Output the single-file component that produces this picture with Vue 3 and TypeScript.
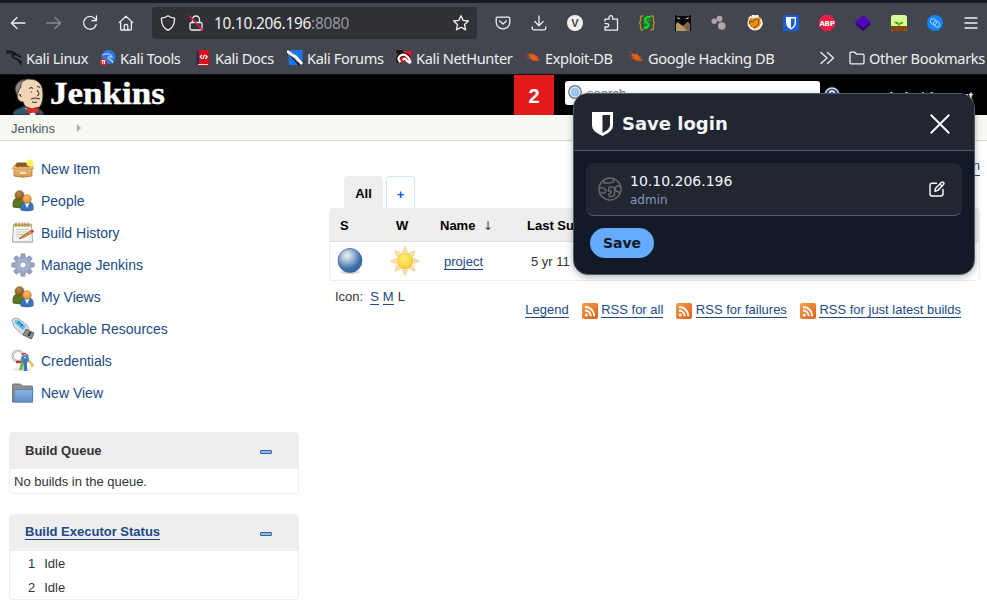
<script setup lang="ts">
interface Entry {
  id: string
  label: string
}

const tools: string[] = ['pocket', 'download', 'vee', 'puzzle', 'braces', 'bat', 'dots', 'fox', 'vault', 'abp', 'layers', 'plant', 'chain', 'menu']

const bookmarks: Entry[] = [
  { id: 'kali', label: 'Kali Linux' },
  { id: 'ktools', label: 'Kali Tools' },
  { id: 'docs', label: 'Kali Docs' },
  { id: 'forums', label: 'Kali Forums' },
  { id: 'hunter', label: 'Kali NetHunter' },
  { id: 'bug', label: 'Exploit-DB' },
  { id: 'bug2', label: 'Google Hacking DB' },
]

const tasks: Entry[] = [
  { id: 'box', label: 'New Item' },
  { id: 'people', label: 'People' },
  { id: 'notepad', label: 'Build History' },
  { id: 'gear', label: 'Manage Jenkins' },
  { id: 'people', label: 'My Views' },
  { id: 'usb', label: 'Lockable Resources' },
  { id: 'keys', label: 'Credentials' },
  { id: 'folder', label: 'New View' },
]

const feeds: Entry[] = [
  { id: 'all', label: 'RSS for all' },
  { id: 'failures', label: 'RSS for failures' },
  { id: 'latest', label: 'RSS for just latest builds' },
]

const executors: number[] = [1, 2]
const rays: number[] = [0, 45, 90, 135, 180, 225, 270, 315]
</script>

<template>
  <div class="window">
    <svg class="defs" width="0" height="0">
      <defs>
        <linearGradient id="gBox" x1="0" y1="0" x2="0" y2="1"><stop offset="0" stop-color="#f3c989" /><stop offset="1" stop-color="#d59a4c" /></linearGradient>
        <linearGradient id="gFolder" x1="0" y1="0" x2="0" y2="1"><stop offset="0" stop-color="#8db4e0" /><stop offset="1" stop-color="#5e8fc9" /></linearGradient>
        <linearGradient id="gRss" x1="0" y1="0" x2="1" y2="1"><stop offset="0" stop-color="#f6a04a" /><stop offset="1" stop-color="#dd5f1c" /></linearGradient>
        <radialGradient id="gBall" cx=".38" cy=".3" r=".8"><stop offset="0" stop-color="#eef3ea" /><stop offset=".25" stop-color="#b4c9dc" /><stop offset=".65" stop-color="#4676b0" /><stop offset="1" stop-color="#2a5a9c" /></radialGradient>
        <radialGradient id="gSun" cx=".45" cy=".35" r=".7"><stop offset="0" stop-color="#ffee78" /><stop offset=".6" stop-color="#ffdb45" /><stop offset="1" stop-color="#f9bf3a" /></radialGradient>
        <radialGradient id="gHeadA" cx=".4" cy=".3" r=".8"><stop offset="0" stop-color="#b78a4c" /><stop offset="1" stop-color="#7c5117" /></radialGradient>
        <radialGradient id="gHeadB" cx=".4" cy=".3" r=".8"><stop offset="0" stop-color="#ffc178" /><stop offset="1" stop-color="#de8520" /></radialGradient>
      </defs>
    </svg>

    <header class="chrome">
      <div class="toolbar">
        <nav class="nav">
          <span class="slot"><svg class="line" viewBox="0 0 16 16"><path d="M15 8H1.600M7 2.500 1.400 8 7 13.500" /></svg></span>
          <span class="slot dim"><svg class="line" viewBox="0 0 16 16"><path d="M1 8h13.400M9 2.500 14.600 8 9 13.500" /></svg></span>
          <span class="slot"><svg class="line" viewBox="0 0 16 16"><path d="M14.200 9.500A6.400 6.400 0 1 1 13 3.800l1.500 1.700M14.500 1v4.700H9.800" /></svg></span>
          <span class="slot"><svg class="line" viewBox="0 0 16 16"><path d="M1.200 7.600 8 1.200l6.800 6.400M2.600 7v7.200q0 .8.8.8h9.200q.8 0 .8-.8V7M6.200 15v-4q0-1.600 1.800-1.600t1.800 1.600v4" /></svg></span>
        </nav>
        <div class="address">
          <svg class="line" viewBox="0 0 16 16"><path d="M8 .8C6 2.400 3.800 2.900 1.500 3.200 1.200 8.800 3.500 13 8 15.300c4.500-2.300 6.800-6.500 6.500-12.100C12.200 2.900 10 2.400 8 .8Z" /></svg>
          <svg class="line lock" viewBox="0 0 16 16"><rect x="2" y="7.500" width="12" height="7.500" rx="1.500" /><path d="M4.500 7.500V4.500a3.500 3.500 0 0 1 7 0v3" /><path class="slash" d="M1 .8 15 15.500" /></svg>
          <span class="url">10.10.206.196<span>:8080</span></span>
          <svg class="line star" viewBox="0 0 16 16"><path d="m8 .7 2.200 4.700 5.200.6-3.900 3.600 1.100 5.300L8 12.300l-4.600 2.600 1.100-5.300L.6 6l5.200-.6Z" /></svg>
        </div>
        <div class="tools">
          <span v-for="t in tools" :key="t" class="slot">
            <svg class="line" viewBox="0 0 16 16">
              <path v-if="t === 'pocket'" d="M2.500 2.200h11q1.300 0 1.300 1.300v4A6.800 6.300 0 0 1 1.200 7.500v-4q0-1.300 1.300-1.300ZM4.700 6 8 9l3.300-3" />
              <path v-else-if="t === 'download'" d="M8 .8v9.700M3.800 6.500 8 10.700l4.200-4.200M1.200 12v1.300q0 1.500 1.500 1.500h10.600q1.500 0 1.500-1.500V12" />
              <g v-else-if="t === 'vee'" class="solid"><circle cx="8" cy="8" r="8" fill="#f1f1f2" /><text x="8" y="12" class="vee">V</text></g>
              <path v-else-if="t === 'puzzle'" d="M2 6V4.200h4V2.500a1.800 1.800 0 0 1 3.600 0v1.700H14.500v11H2v-3.200h2a1.700 1.700 0 0 0 0-3.400H2" />
              <g v-else-if="t === 'braces'"><path stroke="#a79c14" d="M4 1H2.800q-1.200 0-1.200 1.500V6L.5 8l1.100 2v3.500Q1.600 15 2.800 15H4M12 1h1.200q1.200 0 1.200 1.500V6l1.100 2-1.100 2v3.500q0 1.500-1.200 1.500H12" /><path stroke="#13e91b" stroke-width="2" d="M10.500 2C6 1.500 4.500 5.500 7.500 7.300S10 13 5.500 13" /><path stroke="#0bbc14" d="M6 5h5M5 8.500h5M6 11h5" /></g>
              <g v-else-if="t === 'bat'" class="solid"><path fill="#08080a" d="M0 0h1l1 1h12l1-1h1v16H0Z" /><path fill="#b9986a" d="M1 16V9.500L2 7l6 4 4-3.500V7l2 1 1 2v6Z" /><path fill="#7e6547" d="m8 11 5.500-4L15 10v6h-3Z" /><path fill="#d4d4d4" d="m2 1.800 4 2.400-3-.2Zm12 0-4 2.400 3-.2Z" /></g>
              <g v-else-if="t === 'dots'" class="solid" fill="#b5a3aa" stroke="#854e57"><circle cx="3.200" cy="6.300" r="2.700" /><circle cx="8.500" cy="3.700" r="3" /><circle cx="10.800" cy="11" r="3.800" /><path d="m7 7 3 3" /></g>
              <g v-else-if="t === 'fox'" class="solid"><circle cx="8" cy="8" r="7.600" fill="#f7e7cf" /><path fill="#ef8a17" d="m3 3 4 .5 6-1.500 1.500 4-2 6-5 2-5-3L1.500 8Z" /><path fill="none" stroke="#60421f" stroke-width=".8" d="m3 6 3 1 2-3 4 1-1 5-5 3-3-3Z" /><path fill="none" stroke="#fff" stroke-width="1.500" stroke-dasharray="2 2" d="M2 3 5 .8h6M14 5l1 4-4 5M2 10l4 4" /></g>
              <g v-else-if="t === 'vault'" class="solid"><rect width="16" height="16" rx="2" fill="#175ddc" /><path fill="#fff" d="M3 2h10v6c0 3-2 5-5 6.500C5 13 3 11 3 8Z" /><path fill="#175ddc" d="M8 3.500h3.600V8c0 2-1.400 3.700-3.600 4.900Z" /></g>
              <g v-else-if="t === 'abp'" class="solid"><path fill="#ed1e45" d="M4.700 0h6.600L16 4.700v6.600L11.300 16H4.700L0 11.300V4.700Z" /><text x="8" y="10.600" class="abp">ABP</text></g>
              <g v-else-if="t === 'layers'" class="solid"><path fill="#260378" d="m0 9 8-6 8 6-8 7Z" /><path fill="#4c08b5" d="m0 7 8-7 8 7-8 6Z" /></g>
              <g v-else-if="t === 'plant'" class="solid"><rect width="16" height="16" rx="2.500" fill="#d9fa92" /><path fill="#884705" d="M0 11h16v2.500q0 2.500-2.500 2.500h-11Q0 16 0 13.500Z" /><path fill="#46a516" d="M3 6.500Q7.500 6 8 9q1-2.700 4.500-1.800-1 2.300-3.900 2.300V11H7.400V9.500Q4 9 3 6.500Z" /></g>
              <g v-else-if="t === 'chain'" class="solid"><circle cx="8" cy="8" r="8" fill="#1683fc" /><g fill="none" stroke="#8bd0ff" stroke-width="1"><rect x="3" y="4" width="6.500" height="5" rx="2.500" transform="rotate(40 6 7)" /><rect x="6.500" y="6.700" width="6.500" height="5" rx="2.500" transform="rotate(40 10 9)" /></g></g>
              <path v-else d="M2 3h12M2 8h12M2 13h12" />
            </svg>
          </span>
        </div>
      </div>

      <div class="bookmarks">
        <span v-for="b in bookmarks" :key="b.id" class="bookmark" :class="b.id">
          <svg viewBox="0 0 16 16">
            <g v-if="b.id === 'kali'" fill="none" stroke="#0c0d0f" stroke-linecap="round"><path stroke-width="1.500" d="M1 1.200c5 0 8 1 9 3.600-3.500-.8-5 1-3 2.700 2 1.500 6.500.3 8 6.700" /><path d="M.5 3.600c3-1 5-.6 7 .6M10 4.500l3 .4 1.500 2-2-.6M13 10.500l2.500 1" /></g>
            <g v-else-if="b.id === 'ktools'"><circle cx="8.500" cy="7" r="7" fill="#2b77e5" /><path d="M2 5c5-2 9-1 10 2-4-1-5 1-3 2 2 .5 3 1 4 4" fill="none" stroke="#a9ccfa" stroke-width="1.300" /><circle cx="3.500" cy="12" r="3.500" fill="#e02329" /><path d="M1.500 10.600h4M2.800 10.600V14M4.500 10.600V14" stroke="#fff" /></g>
            <g v-else-if="b.id === 'docs'"><path fill="#d80f16" d="M3 0h11v16H3Z" /><path fill="#192c5c" d="M1.500 1H4v14H1.500Z" /><path fill="#e8dede" d="M3 14h10v1H3Z" /><path d="M7 4.800 5.200 6.800l2 2M10.500 5l1.700 2-2 2M8 8.800 9.500 4.600" fill="none" stroke="#fff" stroke-width="1.200" /></g>
            <g v-else-if="b.id === 'forums'"><path fill="#1876e8" d="M1 0h15l-1 15H2Z" /><path d="m1 2 5 4 8 9" stroke="#1d2430" stroke-width="4.500" /><path d="m0 1 5 4 4 2 6 7" fill="none" stroke="#fff" stroke-width="2.800" /><path d="m1 4 5 3 5 5M3 1l5 4" stroke="#a6adb7" /></g>
            <g v-else-if="b.id === 'hunter'"><path fill="#dd1c2b" d="M2 1h14l-1.500 11H2Z" /><path d="M1 3q3-3 5 0M3 12C-1 6 9 1 13 8" fill="none" stroke="#171116" stroke-width="4" /><path d="M4.500 12C-1 8 6 3 10 5.500S14 12 15 13M7 10q2-3 4 1l3 2" fill="none" stroke="#fff" stroke-width="2.200" /></g>
            <g v-else><path fill="#e95e12" d="M3.500 4.500c3.500-2 8 0 9.500 4.500l1 1.500-2 .5-4-.5C5 9 3.500 7 3.500 4.500Z" /><path d="M1 2.500l3 .5 3 3M.5 6h3.500l3 2M2 9.500l4-1.500M7 11l2-2M11 12l1-3M12 7l3-1.500M13 9.500l3 .5" fill="none" stroke="#a5532a" stroke-width=".8" /></g>
          </svg>
          <span>{{ b.label }}</span>
        </span>
        <svg class="line more" viewBox="0 0 16 16"><path d="M2 2.500 8 8l-6 5.500M8.500 2.500l6 5.500-6 5.500" /></svg>
        <svg class="line dir" viewBox="0 0 16 16"><path d="M1 3.500q0-1.300 1.300-1.300h3.500l1.800 2h6.100q1.300 0 1.300 1.300v7q0 1.300-1.300 1.300H2.300Q1 13.800 1 12.500Z" /></svg>
        <span class="other">Other Bookmarks</span>
      </div>
    </header>

    <div class="masthead">
      <svg class="logo" width="160" height="40" viewBox="0 0 160 40">
        <path d="M1 40q0-5 5-6l6-3 14 2q5 2 6 7Z" fill="#33586c" stroke="#172b36" />
        <path d="m13 33 5 7h5l3-7Z" fill="#eee" />
        <path d="M5 19C1 8 8 4 17 4c10 0 14 6 14 15 0 7-1 12-6 15-5 1-12 0-14-7-4 0-6-3-6-8Z" fill="#f0d6b7" stroke="#3a2a20" />
        <path d="M4.500 19C0 10 8 4.500 14 4.500c-4 2-6 4-5 8-3 1-1 4-4.500 6.500Z" fill="#8a8582" stroke="#2d2724" stroke-width=".8" />
        <path d="M17 13.500q2-2 4 0M25 12q2-2 3 1M19.500 16.500v1M26 16v1M25 15q4 5 0 6M19 24q4-2 9 0M20 27q3 1 5 0M6.500 20q2-2 2.500 2" fill="none" stroke="#2d2724" stroke-width="1" />
        <path d="m15 32 5 2 6-2 1 7-6-2-6 2Z" fill="#dc2f2c" stroke="#6d1717" stroke-width=".7" />
        <text x="38" y="29" class="brand" textLength="115" lengthAdjust="spacingAndGlyphs">Jenkins</text>
      </svg>
      <span class="alert">2</span>
      <span class="search">
        <svg viewBox="0 0 16 16"><circle cx="8" cy="7" r="6.300" fill="#9cc5ef" stroke="#77766f" stroke-width="1.200" /><circle cx="8" cy="7" r="4.900" fill="none" stroke="#e5f1fb" /><path d="m12 12 3 3" stroke="#77766f" stroke-width="2" /></svg>
        search
      </span>
      <svg class="help" viewBox="0 0 16 16"><circle cx="8" cy="8" r="7" fill="#31539c" stroke="#d8e0ef" stroke-width="1.400" /><path d="M5.800 6q.2-2 2.200-2t2 1.800C10 7.200 8 7.200 8 9.200M8 11v1.500" fill="none" stroke="#fff" stroke-width="1.600" /></svg>
      <span class="account"><b>admin</b> <span>|</span> <b>log out</b></span>
    </div>

    <div class="crumbs"><span>Jenkins</span><i></i></div>

    <div class="content">
      <aside>
        <ul class="tasks">
          <li v-for="t in tasks" :key="t.label">
            <svg viewBox="0 0 24 24">
              <g v-if="t.id === 'box'"><path d="M3 9h18v10q-9 2.500-18 0Z" fill="url(#gBox)" stroke="#b27a35" stroke-width=".8" /><path d="m4 8 2-2.500h12L20 8l-1 2H5Z" fill="#8a5c26" /><path d="M4 8 1 11.500l3 .7h16l3-.7L20 8l-1 2H5Z" fill="#efc27c" stroke="#c28c45" stroke-width=".7" /><path d="M9 15h6v2H9Z" fill="#f9e2b6" /><circle cx="19" cy="6" r="3.500" fill="#fcf267" /><path d="m19 2 1 3 3 1-3 1-1 3-1-3-3-1 3-1Z" fill="#fff34a" /></g>
              <g v-else-if="t.id === 'people'"><path d="M2 18q-1-8 4-9h6q4 2 4 9-7 2-14 0Z" fill="#5f7526" stroke="#465a16" stroke-width=".7" /><circle cx="8.500" cy="6.200" r="4.500" fill="url(#gHeadA)" stroke="#7c5117" stroke-width=".6" /><path d="M10 21q-1-7 3-8h6q4 1 3 8-6 2-12 0Z" fill="#3b73b8" stroke="#285891" stroke-width=".7" /><path d="m14 14 2 5 2.500-5Z" fill="#fff" /><circle cx="16" cy="10" r="4.300" fill="url(#gHeadB)" stroke="#c17420" stroke-width=".6" /></g>
              <g v-else-if="t.id === 'notepad'"><path d="M2.500 3.500h18L21.500 21q-10 1-20 0Z" fill="#f5f5f1" stroke="#a4a49e" /><path d="M2 20h19v2H2Z" fill="#c7c7c1" /><path d="M3 2.500h17v3H3Z" fill="#c6b764" /><path d="M5 1.500v4m3-4v4m3-4v4m3-4v4m3-4v4" stroke="#837633" stroke-width=".8" /><path d="M5 8.500h13M5 11h12M5 13.500h10M5 16h4" stroke="#c8c8c4" /><path d="m8 17.800 3.500-3L20 9.500l1.500 2-9 5Z" fill="#e3973f" stroke="#885520" stroke-width=".7" /><path d="m19.500 9.500 2-1 1.700 2-1.500 1.300Z" fill="#df3931" /></g>
              <g v-else-if="t.id === 'gear'"><g fill="#9aa2c4" stroke="#7f86a8" stroke-width=".7"><path v-for="r in rays" :key="r" d="M9 7.500 10.200.8h3.600L15 7.500Z" :transform="`rotate(${r} 12 12)`" /></g><circle cx="12" cy="12" r="7.800" fill="#9ba4c7" /><circle cx="12" cy="12" r="6" fill="#adb5d3" /><circle cx="12" cy="12" r="3.300" fill="#fff" stroke="#7f86a8" /></g>
              <g v-else-if="t.id === 'usb'"><path d="M1 3q2-3 7-1l8 6 2 4-4 5-3 .5L3 10Z" fill="#d9dee1" stroke="#a4adb4" /><path d="m4 3 4 .5 7 6-3 3.500-8-7Z" fill="#52bfee" /><path d="m7 5 5 4M6 7l3-3M9 10l3-3" stroke="#1b7aae" /><path d="m15 12 8 4-2.500 6-8.500-4Z" fill="#8a8a8a" stroke="#555" stroke-width=".8" /><path d="m18 15.500 2 1m-3 1 2 1" stroke="#222" stroke-width="1.400" /></g>
              <g v-else-if="t.id === 'keys'"><ellipse cx="11" cy="20.500" rx="10" ry="1.800" fill="#eaeae8" /><circle cx="7" cy="7" r="5.200" fill="none" stroke="#8b918e" stroke-width="2.200" /><circle cx="7" cy="7" r="5.200" fill="none" stroke="#e6e6e6" stroke-width="1.200" /><path d="m14 8 7 7 .5 3" fill="none" stroke="#e3bd5a" stroke-width="2.500" /><path d="M5 13h7" stroke="#cf3329" stroke-width="2.500" /><path d="M12 11 9.500 21" stroke="#5aba32" stroke-width="3" /><path d="M10.500 5.500q4-2.500 6.500 1.500" stroke="#d1472d" stroke-width="1.500" fill="none" /><circle cx="14" cy="10" r="4" fill="#4b83c5" /><path d="m14 10 .5 12" stroke="#3c74b6" stroke-width="3.500" /><circle cx="14" cy="8.500" r=".8" fill="#fff" /></g>
              <g v-else><path d="M1.500 21V4q0-1 1-1h7l2 2h9q1 0 1 1v15Z" fill="#8e908d" stroke="#777a77" /><path d="M3.500 8.500h18.500q-.5 6-.5 12.500H3Q3 15 3.500 8.500Z" fill="url(#gFolder)" stroke="#4877ac" stroke-width=".8" /></g>
            </svg>
            <a>{{ t.label }}</a>
          </li>
        </ul>
        <section class="pane">
          <h2><span>Build Queue</span><i></i></h2>
          <p>No builds in the queue.</p>
        </section>
        <section class="pane">
          <h2><a>Build Executor Status</a><i></i></h2>
          <p v-for="n in executors" :key="n" class="exec"><span>{{ n }}</span>Idle</p>
        </section>
      </aside>

      <main>
        <div class="describe"><a>add description</a></div>
        <div class="tabs"><span class="active">All</span><span class="add">+</span></div>
        <div class="jobs">
          <div class="row head"><span>S</span><span>W</span><span>Name&nbsp; <em>↓</em></span><span>Last Success</span></div>
          <div class="row">
            <svg class="ball" viewBox="0 0 28 28"><ellipse cx="14" cy="25" rx="10" ry="2.200" fill="#dadada" /><circle cx="14" cy="13.500" r="12" fill="url(#gBall)" stroke="#3a659c" stroke-width=".8" /></svg>
            <svg class="sun" viewBox="0 0 30 30"><path v-for="r in rays" :key="r" d="m12.500 6 2.500-5.500L17.500 6Z" fill="#fbe3a4" stroke="#f2c98a" stroke-width=".7" :transform="`rotate(${r} 15 15)`" /><circle cx="15" cy="15" r="8" fill="url(#gSun)" stroke="#f3bb5c" stroke-width=".8" /></svg>
            <a>project</a>
            <span>5 yr 11 mo</span>
          </div>
        </div>
        <div class="sizes">Icon:<a class="first">S</a><a>M</a><span>L</span></div>
        <div class="feeds">
          <a>Legend</a>
          <span v-for="f in feeds" :key="f.id" class="feed" :class="f.id">
            <svg viewBox="0 0 16 16"><rect width="16" height="16" rx="2" fill="url(#gRss)" /><circle cx="4.300" cy="11.900" r="1.500" fill="#fff" /><path d="M3 7.500a5.700 5.700 0 0 1 5.700 5.800M3 4a9.200 9.200 0 0 1 9.300 9.300" fill="none" stroke="#fff" stroke-width="1.900" /></svg>
            <a>{{ f.label }}</a>
          </span>
        </div>
      </main>
    </div>

    <div class="popup">
      <div class="title">
        <svg class="shield" viewBox="0 0 21 24"><path fill="#fff" d="M0 0h21v13c0 5-4 8-10.500 11C4 21 0 18 0 13Z" /><path fill="#212631" d="M10.500 3H18v10c0 3-3 5.500-7.500 8Z" /></svg>
        <span>Save login</span>
        <svg class="close" viewBox="0 0 20 20"><path d="m.8.800 18.400 18.400M19.200.8.8 19.200" /></svg>
      </div>
      <div class="card">
        <svg class="globe" viewBox="0 0 24 24"><circle cx="12" cy="12" r="11" /><path d="M6 3.500V6h5l4.500-1V1.800M1.500 10.500l4 .5 2.500 2-1 3H4l-1.500-1M22.500 9H19l-2 2 1 3 4 1.500M11 10h3.500q2 0 2 2v6l-2 1.500H11V17l2-1v-2h-2.500Z" /></svg>
        <div class="who"><span>10.10.206.196</span><small>admin</small></div>
        <svg class="edit" viewBox="0 0 16 16"><path d="M7.500 2.200H3.200Q1 2.200 1 4.400v8.400Q1 15 3.200 15h8.600q2.200 0 2.200-2.200V8.500M6 10.200l.6-3L12.300 1.500q1-1 2.100 0t0 2.200L8.800 9.400ZM11 3l2 2" /></svg>
      </div>
      <button>Save</button>
    </div>
  </div>
</template>

<style>
body {
  overflow: hidden;
  background: #fff;
}
</style>

<style scoped>
* {
  box-sizing: border-box;
}
.window {
  position: relative;
  width: 987px;
  height: 611px;
  overflow: hidden;
  font-family: "Liberation Sans", Arial, sans-serif;
  font-size: 13px;
  color: #333;
}
svg {
  display: block;
  flex: none;
}
.defs {
  position: absolute;
}
a {
  color: #204a87;
}
.chrome {
  height: 75px;
  border-top: 3px solid #181a20;
  border-bottom: 1px solid #111318;
  background: #43464e;
  color: #f0f0f1;
  font-family: "Noto Sans", sans-serif;
}
.toolbar {
  display: flex;
  height: 40px;
  align-items: center;
}
.nav,
.tools {
  display: flex;
  flex: none;
}
.slot {
  display: flex;
  width: 36px;
  justify-content: center;
}
.dim {
  opacity: .4;
}
.line {
  width: 16px;
  height: 16px;
  fill: none;
  stroke: #f0f0f1;
  stroke-width: 1.300;
  stroke-linecap: round;
  stroke-linejoin: round;
}
.solid {
  stroke: none;
}
.vee {
  fill: #45474d;
  font: bold 11px "Liberation Sans", sans-serif;
  text-anchor: middle;
}
.abp {
  fill: #fff;
  font: bold 7px "DejaVu Sans", sans-serif;
  text-anchor: middle;
  letter-spacing: -.300px;
}
.address {
  display: flex;
  flex: none;
  width: 325px;
  height: 32px;
  margin: 0 8px;
  padding: 0 8px;
  align-items: center;
  border-radius: 4px;
  background: #2f3137;
}
.lock {
  margin-left: 12px;
}
.slash {
  stroke: #ee1746;
}
.url {
  margin-left: 10px;
  font-size: 15.400px;
  letter-spacing: -.260px;
}
.url span {
  color: #96979c;
}
.star {
  margin-left: auto;
}
.bookmarks {
  display: flex;
  height: 30px;
  padding-left: 6px;
  align-items: center;
  font-size: 14.600px;
  letter-spacing: -.360px;
  white-space: nowrap;
}
.bookmark {
  display: flex;
  flex: none;
  gap: 4px;
  align-items: center;
  width: 94px;
}
.bookmark svg {
  width: 16px;
  height: 16px;
}
.ktools { width: 95px; }
.docs { width: 92px; }
.forums { width: 109px; }
.hunter { width: 129px; }
.bug { width: 103px; }
.bug2 { width: 191px; }
.dir {
  margin: 0 4px 0 14px;
}
.masthead {
  display: flex;
  height: 40px;
  background: #000;
}
.logo {
  margin-left: 12px;
}
.brand {
  fill: #fff;
  stroke: #fff;
  stroke-width: .400px;
  font: bold 31px "Liberation Serif", serif;
}
.alert {
  width: 40px;
  margin-left: 342px;
  background: #e21a1a;
  color: #fff;
  font-size: 20px;
  font-weight: bold;
  line-height: 43px;
  text-align: center;
}
.search {
  display: flex;
  width: 255px;
  height: 24px;
  margin: 6px 0 0 11px;
  padding-left: 2px;
  gap: 4px;
  border-radius: 3px;
  background: #fff;
  color: #777;
  line-height: 26px;
}
.search svg {
  width: 16px;
  height: 16px;
  margin-top: 4px;
}
.help {
  width: 16px;
  height: 16px;
  margin: 12px 0 0 4px;
}
.account {
  display: flex;
  gap: 5px;
  margin: 14px 0 0 38px;
  color: #fff;
  font-size: 13px;
  white-space: nowrap;
}
.crumbs {
  display: flex;
  height: 26px;
  padding: 1px 0 0 11px;
  align-items: center;
  gap: 22px;
  border-bottom: 1px solid #d3d7cf;
  background: #f6faf2;
  color: #4d545d;
}
.crumbs i {
  border: 4px solid transparent;
  border-left-color: #aaa;
  border-right: 0;
}
.content {
  display: flex;
}
aside {
  width: 290px;
  margin-left: 9px;
}
.tasks {
  margin: 0 0 23px;
  padding: 12px 0 0 2px;
  list-style: none;
}
.tasks li {
  display: flex;
  height: 32px;
  gap: 6px;
  align-items: center;
  font-size: 14px;
}
.tasks svg {
  width: 24px;
  height: 24px;
}
.pane {
  margin-bottom: 20px;
  border: 1px solid #eee;
  border-radius: 4px;
  overflow: hidden;
}
.pane h2 {
  display: flex;
  height: 36px;
  margin: 0;
  padding: 0 26px 1px 15px;
  align-items: center;
  justify-content: space-between;
  background: #eee;
  font-size: 13px;
}
.pane h2 a,
main a {
  text-decoration: none;
  border-bottom: 1px solid #204a87;
  line-height: 14px;
}
.pane h2 i {
  width: 12px;
  height: 4px;
  margin-top: 3px;
  border: 1px solid #3465a4;
  border-radius: 1px;
  background: #91b9e5;
}
.pane p {
  height: 24px;
  margin: 0;
  padding-left: 4px;
  line-height: 26px;
}
.pane .exec {
  display: flex;
  gap: 9px;
  padding-left: 18px;
}
main {
  width: 651px;
  margin-left: 30px;
}
.describe {
  display: flex;
  height: 35px;
  padding-top: 18px;
  justify-content: flex-end;
}
.tabs {
  display: flex;
  gap: 3px;
  height: 32px;
  padding-left: 15px;
  font-weight: bold;
  line-height: 35px;
  text-align: center;
  color: #000;
}
.tabs .active {
  width: 39px;
  border-radius: 4px 4px 0 0;
  background: #eee;
}
.tabs .add {
  width: 29px;
  border: 1px solid #cfeaff;
  border-bottom: 0;
  border-radius: 4px 4px 0 0;
  color: #0b5fd8;
}
.jobs {
  height: 73px;
  border: 1px solid #eee;
  border-radius: 4px;
}
.row {
  display: grid;
  height: 38px;
  padding-left: 6px;
  grid-template-columns: 54px 54px 87px 1fr;
  align-items: center;
}
.row a,
.row > span:last-child {
  justify-self: start;
}
.row a {
  margin-top: 2px;
}
.head {
  height: 33px;
  padding-left: 10px;
  grid-template-columns: 56px 44px 87px 1fr;
  border-bottom: 1px solid #ddd;
  background: #eee;
  color: #000;
  font-weight: bold;
}
.head em {
  color: #444;
  font: 12px "DejaVu Sans", sans-serif;
  line-height: 14px;
}
.ball {
  width: 28px;
  height: 28px;
}
.sun {
  width: 30px;
  height: 30px;
}
.sizes {
  display: flex;
  padding: 8px 0 0 6px;
  gap: 4px;
  line-height: 15px;
}
.sizes a {
  height: 16px;
  line-height: 15px;
}
.first {
  margin-left: 3px;
}
.feeds {
  display: flex;
  padding: 0 19px 0 0;
  margin-top: -3px;
  height: 16px;
  align-items: center;
  justify-content: flex-end;
  gap: 13px;
}
.feed {
  display: flex;
  gap: 3.500px;
  align-items: center;
}
.feed svg {
  width: 16px;
  height: 16px;
  margin-top: 2px;
}
.popup {
  position: absolute;
  left: 573px;
  top: 93px;
  width: 402px;
  height: 182px;
  border: 1px solid #525b6a;
  border-radius: 15px;
  background: #121a27;
  overflow: hidden;
  box-shadow: 0 2px 7px rgba(0, 0, 0, .3);
  font-family: "DejaVu Sans", sans-serif;
  color: #f3f6f9;
}
.title {
  display: flex;
  height: 57px;
  padding: 3px 24px 0 18px;
  align-items: center;
  border-bottom: 1px solid #525b6a;
  background: #212631;
  font-size: 18px;
  font-weight: bold;
}
.shield {
  width: 21px;
  height: 24px;
  margin-right: 9px;
}
.close {
  width: 20px;
  height: 20px;
  margin-left: auto;
  fill: none;
  stroke: #f3f6f9;
  stroke-width: 2;
}
.card {
  display: flex;
  height: 53px;
  margin: 12px 12px;
  padding: 0 17px 0 12px;
  align-items: center;
  border-bottom: 1px solid #525b6a;
  border-radius: 8px;
  background: #212631;
}
.globe {
  width: 24px;
  height: 24px;
  fill: none;
  stroke: #666;
  stroke-width: 1.500;
}
.who {
  display: flex;
  margin-left: 8px;
  padding-top: 2px;
  flex-direction: column;
  font-size: 14px;
  line-height: 19px;
}
.who small {
  color: #8898b5;
  font-size: 12px;
  line-height: 18px;
}
.edit {
  width: 16px;
  height: 16px;
  margin-left: auto;
  fill: none;
  stroke: #f3f6f9;
  stroke-width: 1.500;
  stroke-linejoin: round;
  stroke-linecap: round;
}
button {
  display: block;
  width: 64px;
  height: 30px;
  margin-left: 16px;
  padding: 0;
  border: 0;
  border-radius: 15px;
  background: #65abff;
  color: #121a27;
  font: bold 14px "DejaVu Sans", sans-serif;
}
</style>
